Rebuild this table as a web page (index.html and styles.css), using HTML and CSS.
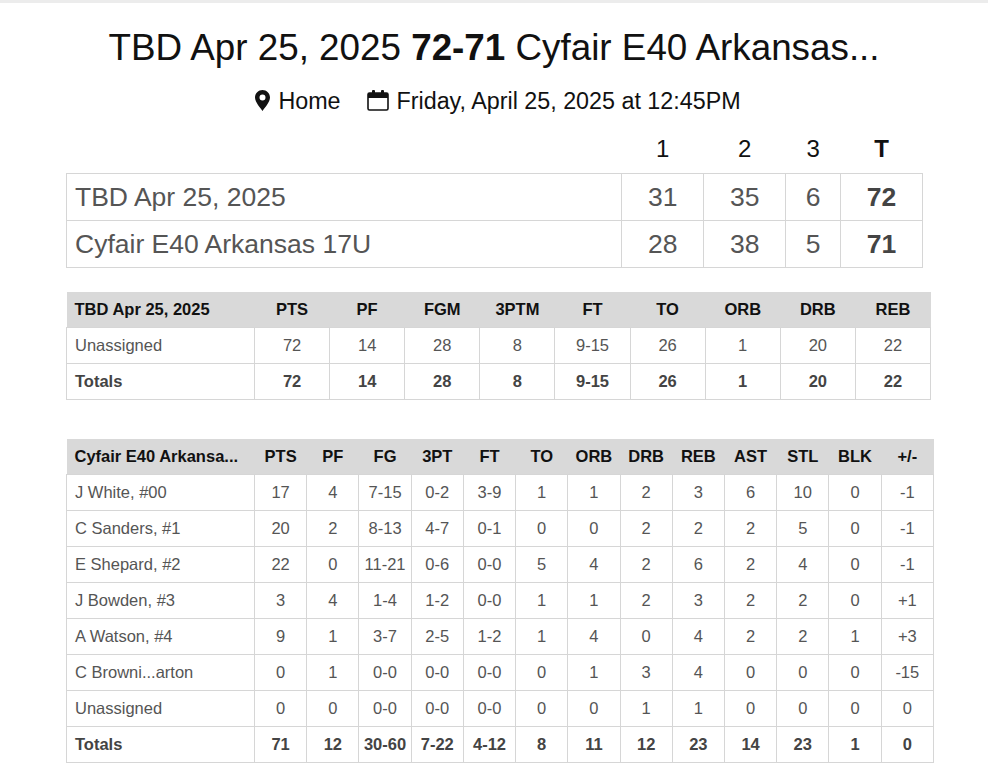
FILE: index.html
```html
<!DOCTYPE html>
<html>
<head>
<meta charset="utf-8">
<link rel="stylesheet" href="styles.css">
</head>
<body>
<div class="topbar"></div>
<div class="page">
  <h1 class="title">TBD Apr 25, 2025 <b>72-71</b> Cyfair E40 Arkansas...</h1>
  <div class="meta">
    <span class="meta-item">
      <svg class="ico-pin" width="15" height="21" viewBox="0 0 15 21"><path d="M7.5 0C3.4 0 0 3.3 0 7.4c0 4.6 5.6 10.6 7.5 13.6 1.9-3 7.5-9 7.5-13.6C15 3.3 11.6 0 7.5 0zm0 10.4a3 3 0 1 1 0-6 3 3 0 0 1 0 6z" fill="#111"/></svg>
      Home
    </span>
    <span class="meta-item">
      <svg class="ico-cal" width="22" height="22" viewBox="0 0 22 22"><rect x="1" y="4" width="20" height="17" rx="1.5" fill="none" stroke="#111" stroke-width="1.6"/><rect x="1" y="4" width="20" height="5" fill="#111"/><rect x="5" y="1" width="3" height="5" rx="1" fill="#111"/><rect x="14" y="1" width="3" height="5" rx="1" fill="#111"/></svg>
      Friday, April 25, 2025 at 12:45PM
    </span>
  </div>

  <table class="linescore">
    <thead>
      <tr><th class="ls-name"></th><th class="ls-q1">1</th><th class="ls-q2">2</th><th class="ls-q3">3</th><th class="ls-t">T</th></tr>
    </thead>
    <tbody>
      <tr><td class="name">TBD Apr 25, 2025</td><td>31</td><td>35</td><td>6</td><td class="tot">72</td></tr>
      <tr><td class="name">Cyfair E40 Arkansas 17U</td><td>28</td><td>38</td><td>5</td><td class="tot">71</td></tr>
    </tbody>
  </table>

  <table class="box box-team">
    <thead>
      <tr><th class="name">TBD Apr 25, 2025</th><th>PTS</th><th>PF</th><th>FGM</th><th>3PTM</th><th>FT</th><th>TO</th><th>ORB</th><th>DRB</th><th>REB</th></tr>
    </thead>
    <tbody>
      <tr><td class="name">Unassigned</td><td>72</td><td>14</td><td>28</td><td>8</td><td>9-15</td><td>26</td><td>1</td><td>20</td><td>22</td></tr>
      <tr class="totals"><td class="name">Totals</td><td>72</td><td>14</td><td>28</td><td>8</td><td>9-15</td><td>26</td><td>1</td><td>20</td><td>22</td></tr>
    </tbody>
  </table>

  <table class="box box-players">
    <thead>
      <tr><th class="name">Cyfair E40 Arkansa...</th><th>PTS</th><th>PF</th><th>FG</th><th>3PT</th><th>FT</th><th>TO</th><th>ORB</th><th>DRB</th><th>REB</th><th>AST</th><th>STL</th><th>BLK</th><th>+/-</th></tr>
    </thead>
    <tbody>
      <tr><td class="name">J White, #00</td><td>17</td><td>4</td><td>7-15</td><td>0-2</td><td>3-9</td><td>1</td><td>1</td><td>2</td><td>3</td><td>6</td><td>10</td><td>0</td><td>-1</td></tr>
      <tr><td class="name">C Sanders, #1</td><td>20</td><td>2</td><td>8-13</td><td>4-7</td><td>0-1</td><td>0</td><td>0</td><td>2</td><td>2</td><td>2</td><td>5</td><td>0</td><td>-1</td></tr>
      <tr><td class="name">E Shepard, #2</td><td>22</td><td>0</td><td>11-21</td><td>0-6</td><td>0-0</td><td>5</td><td>4</td><td>2</td><td>6</td><td>2</td><td>4</td><td>0</td><td>-1</td></tr>
      <tr><td class="name">J Bowden, #3</td><td>3</td><td>4</td><td>1-4</td><td>1-2</td><td>0-0</td><td>1</td><td>1</td><td>2</td><td>3</td><td>2</td><td>2</td><td>0</td><td>+1</td></tr>
      <tr><td class="name">A Watson, #4</td><td>9</td><td>1</td><td>3-7</td><td>2-5</td><td>1-2</td><td>1</td><td>4</td><td>0</td><td>4</td><td>2</td><td>2</td><td>1</td><td>+3</td></tr>
      <tr><td class="name">C Browni...arton</td><td>0</td><td>1</td><td>0-0</td><td>0-0</td><td>0-0</td><td>0</td><td>1</td><td>3</td><td>4</td><td>0</td><td>0</td><td>0</td><td>-15</td></tr>
      <tr><td class="name">Unassigned</td><td>0</td><td>0</td><td>0-0</td><td>0-0</td><td>0-0</td><td>0</td><td>0</td><td>1</td><td>1</td><td>0</td><td>0</td><td>0</td><td>0</td></tr>
      <tr class="totals"><td class="name">Totals</td><td>71</td><td>12</td><td>30-60</td><td>7-22</td><td>4-12</td><td>8</td><td>11</td><td>12</td><td>23</td><td>14</td><td>23</td><td>1</td><td>0</td></tr>
    </tbody>
  </table>
</div>
</body>
</html>
```

FILE: styles.css
```css
html, body {
  margin: 0;
  padding: 0;
  background: #fff;
}
body {
  font-family: "Liberation Sans", Arial, sans-serif;
  color: #111;
}
.topbar {
  height: 3px;
  background: #ececec;
}
.page {
  padding: 0 0 0 66px;
}
.title {
  margin: 24px 66px 0 0;
  font-size: 36.8px;
  line-height: 42px;
  font-weight: normal;
  text-align: center;
  color: #111;
}
.title b {
  font-weight: bold;
}
.meta {
  margin: 18px 58px 0 0;
  display: flex;
  justify-content: center;
  gap: 26px;
  font-size: 23.3px;
  line-height: 28px;
  color: #111;
}
.meta-item {
  display: inline-flex;
  align-items: center;
  gap: 8px;
}
.ico-pin { margin-top: -2px; }
.ico-cal { margin-top: -2px; }

table {
  border-collapse: collapse;
}
.linescore {
  margin-top: 10px;
  width: 857px;
  font-size: 26.5px;
  color: #555;
}
.linescore th {
  height: 48px;
  padding: 0;
  font-size: 24px;
  font-weight: normal;
  color: #111;
  text-align: center;
  vertical-align: middle;
}
.linescore th.ls-t { font-weight: bold; }
.ls-name { width: 556px; }
.ls-q1 { width: 82px; }
.ls-q2 { width: 82px; }
.ls-q3 { width: 55px; }
.ls-t { width: 82px; }
.linescore td {
  height: 46px;
  padding: 0;
  border: 1px solid #d6d6d6;
  text-align: center;
  vertical-align: middle;
}
.linescore td.name {
  text-align: left;
  padding-left: 8px;
}
.linescore td.tot {
  font-weight: bold;
  color: #444;
}

.box {
  font-size: 16.5px;
  color: #555;
  table-layout: fixed;
}
.box-team {
  margin-top: 24px;
  width: 865px;
}
.box-players {
  margin-top: 39px;
  width: 868px;
}
.box th {
  height: 35px;
  padding: 0;
  background: #d9d9d9;
  color: #111;
  font-weight: bold;
  text-align: center;
  vertical-align: middle;
}
.box td {
  height: 35px;
  padding: 0;
  border: 1px solid #d6d6d6;
  text-align: center;
  vertical-align: middle;
}
.box th.name, .box td.name {
  text-align: left;
  padding-left: 8px;
  width: 180px;
}
.box .totals td {
  font-weight: bold;
  color: #444;
}
```
